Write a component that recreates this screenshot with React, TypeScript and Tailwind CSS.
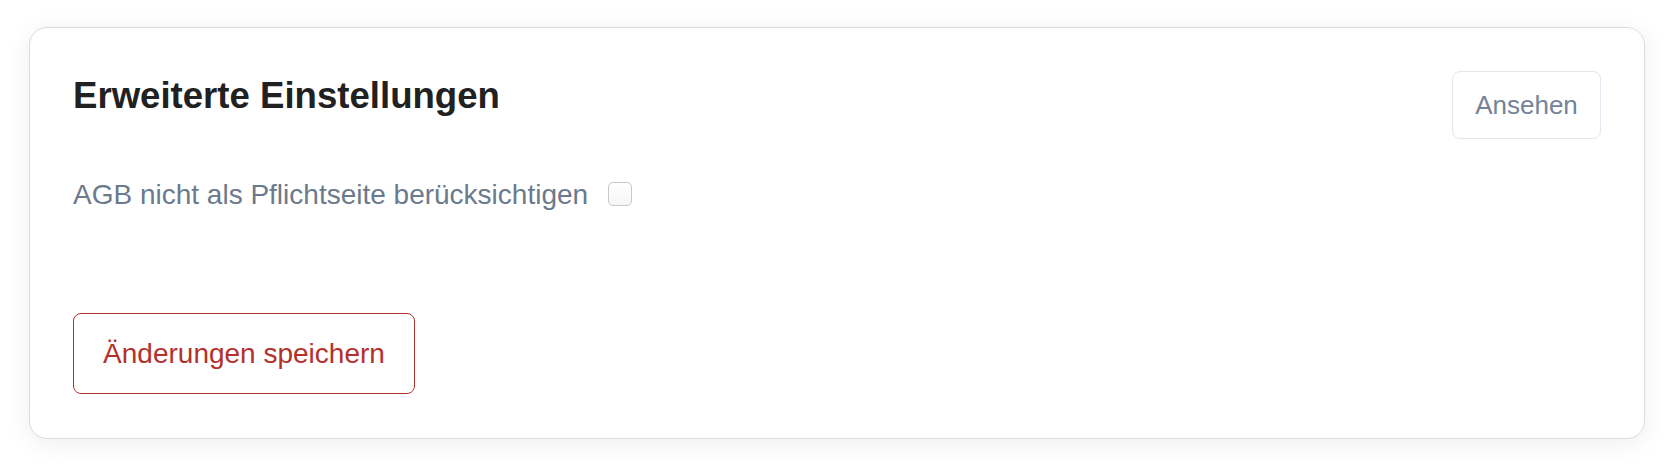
export default function App() {
  return (
    <div className="min-h-[476px] w-[1678px] bg-white pt-[27px] pl-[29px] font-['Liberation_Sans',Arial,sans-serif]">
      <div className="w-[1616px] h-[412px] rounded-[18px] border-[1.5px] border-[#dcdcdc] bg-white p-[43px] shadow-[0_4px_24px_rgba(0,0,0,0.07)]">
        {/* Header */}
        <div className="flex items-start justify-between">
          <h2 className="mt-[3px] text-[36.6px] leading-[44px] font-bold text-[#212121]">
            Erweiterte Einstellungen
          </h2>
          <button className="h-[68px] w-[149px] rounded-[8px] border-[1.5px] border-[#e2e6ee] bg-white text-[26px] text-[#74839a]">
            Ansehen
          </button>
        </div>

        {/* Option */}
        <label className="mt-[40px] flex items-center">
          <span className="text-[28px] leading-[32px] text-[#6b7a8c]">
            AGB nicht als Pflichtseite berücksichtigen
          </span>
          <span className="ml-[20px] mb-[3px] block h-[24px] w-[24px] rounded-[5px] border-[1.5px] border-[#c9c9c9] bg-gradient-to-b from-white to-[#f6f6f6]" />
        </label>

        {/* Save */}
        <button className="mt-[102px] h-[81px] w-[342px] rounded-[8px] border-[1.5px] border-[#b3312b] bg-white text-[28px] text-[#b3312b]">
          Änderungen speichern
        </button>
      </div>
    </div>
  );
}
